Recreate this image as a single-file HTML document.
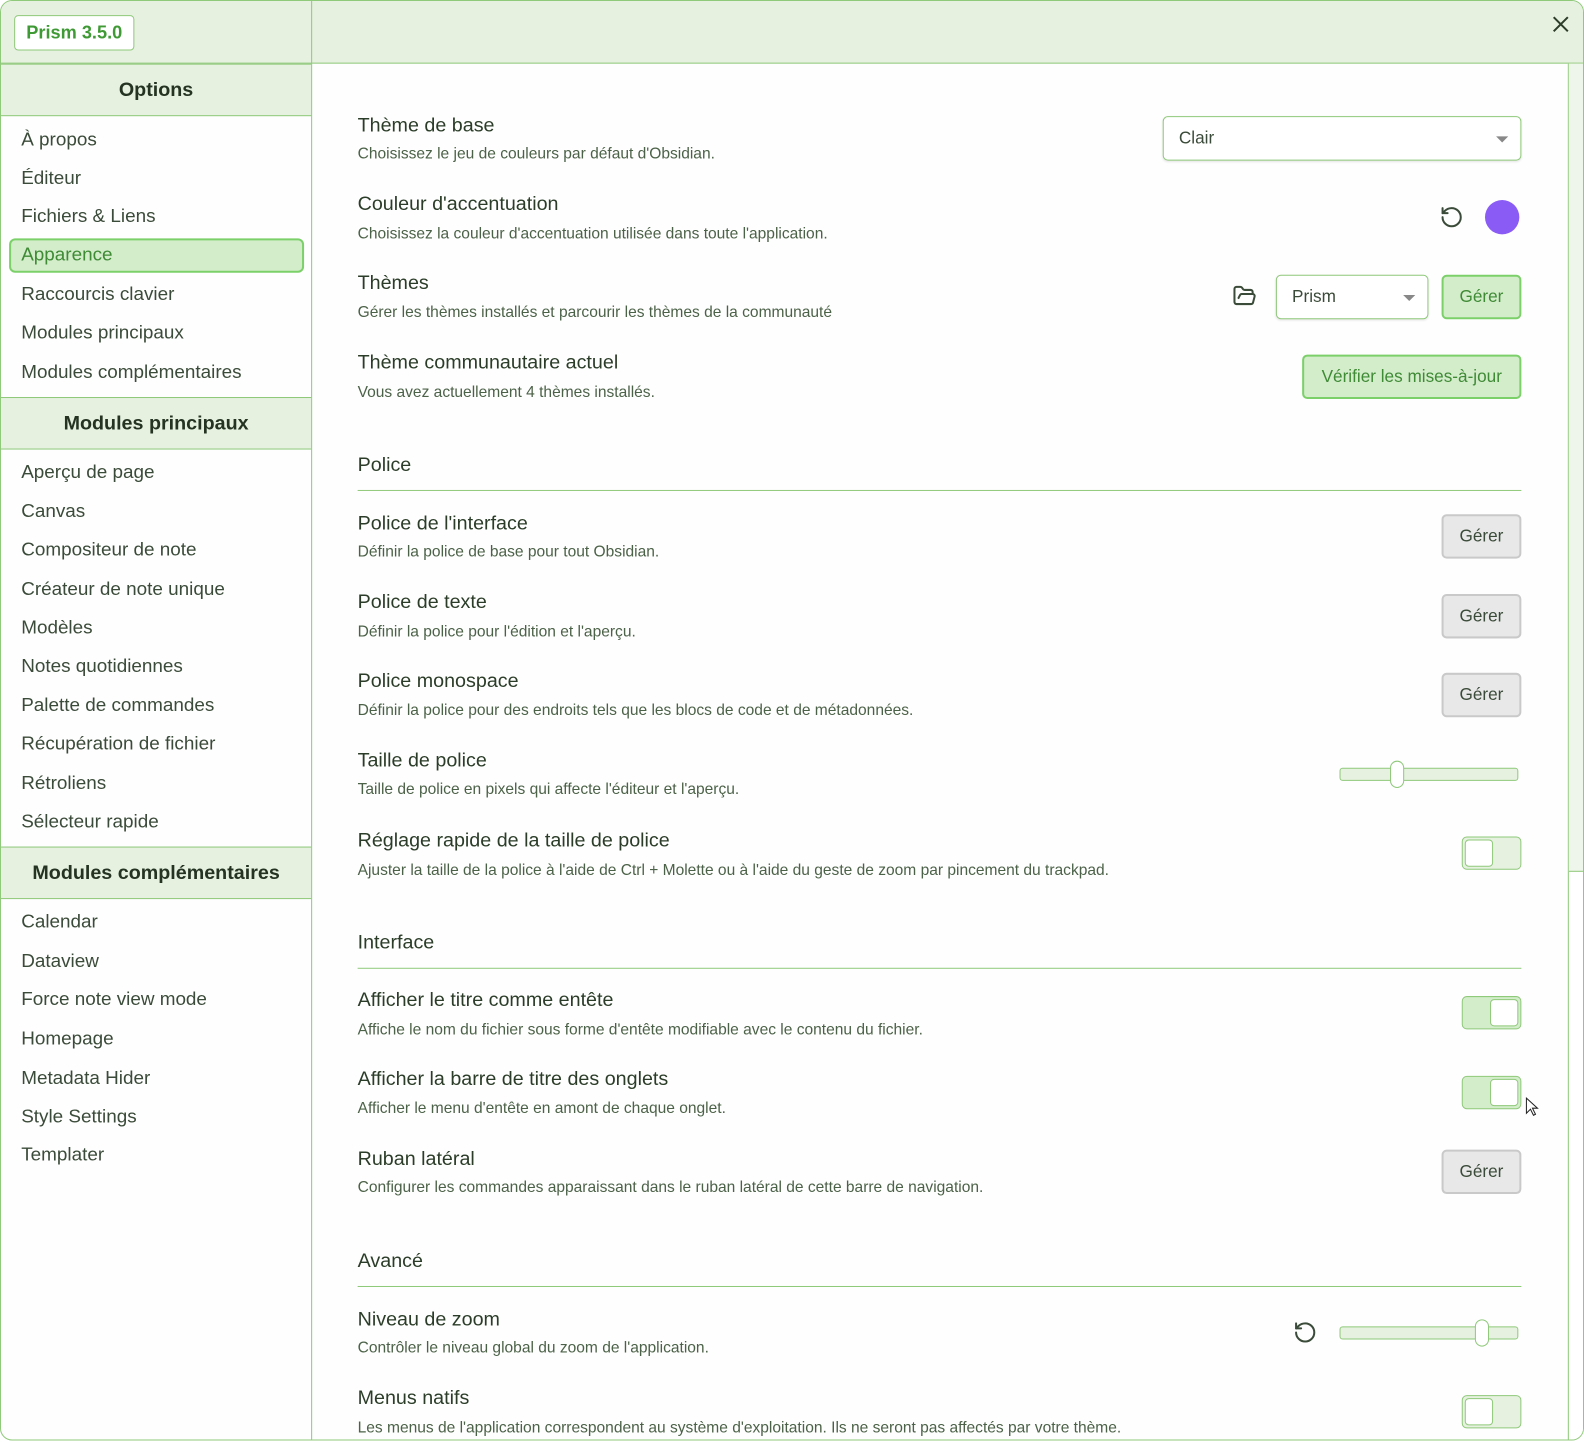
<!DOCTYPE html>
<html><head><meta charset="utf-8">
<style>
*{box-sizing:border-box;margin:0;padding:0}
html,body{width:1584px;height:1441px;overflow:hidden;background:#fff}
body{font-family:"Liberation Sans",sans-serif}
#s{position:absolute;left:0;top:0;width:1568px;height:1427px;transform:scale(1.0102);transform-origin:0 0}
.modal{position:absolute;left:0;top:0;width:1568px;height:1426px;border:1px solid #8fc97a;border-radius:12px;overflow:hidden;background:#fefefe}
.top{position:absolute;left:0;top:0;width:1568px;height:62px;background:#e6f1e0;border-bottom:1px solid #8fc97a}
.vdiv{position:absolute;left:307px;top:0;width:1px;height:1427px;background:#8fc97a}
.badge{position:absolute;left:13px;top:14px;width:119px;height:35px;background:#fff;border:1px solid #8fc97a;border-radius:4px;color:#3f9a35;font-weight:bold;font-size:18px;line-height:33px;text-align:center}
.x{position:absolute;left:1535px;top:14px}
.sh{position:absolute;left:0;width:307px;height:52px;background:#e6f1e0;border-top:1px solid #8fc97a;border-bottom:1px solid #8fc97a;text-align:center;font-weight:bold;font-size:19.5px;color:#243322;line-height:50px}
.si{position:absolute;left:20px;font-size:18.7px;color:#3b4b39;line-height:24px;white-space:nowrap}
.act{position:absolute;left:8px;top:235px;width:292px;height:34px;background:#d3edcb;border:2px solid #7cd06a;border-radius:6px}
.t{position:absolute;left:353px;font-size:19.5px;color:#2b3d28;line-height:24px;white-space:nowrap}
.d{position:absolute;left:353px;font-size:15.4px;color:#4c6248;line-height:20px;white-space:nowrap}
.hd{position:absolute;left:353px;font-size:19.5px;color:#2b3d28;line-height:24px}
.ln{position:absolute;left:353px;width:1152px;height:1px;background:#8fc97a}
.btn{position:absolute;left:1426px;width:79px;height:44px;background:#e8e8e8;border:2px solid #c9c9c9;border-radius:5px;font-size:17px;color:#3b4b39;text-align:center;line-height:40px}
.gbtn{position:absolute;height:44px;background:#d3edcb;border:2px solid #7cd06a;border-radius:5px;font-size:17px;color:#3f8a35;text-align:center;line-height:40px}
.dd{position:absolute;height:44px;background:#fff;border:1px solid #8fc97a;border-radius:5px;font-size:17px;color:#3b4b39;line-height:42px;padding-left:15px;box-shadow:0 1px 2px rgba(0,0,0,.1)}
.dd:after{content:"";position:absolute;right:12px;top:19px;border-left:6px solid transparent;border-right:6px solid transparent;border-top:6px solid #888}
.tg{position:absolute;left:1446px;width:59px;height:33px;border:1px solid #8fc97a;border-radius:5px;background:#e6f1e0}
.tg.on{background:#d3edcb}
.tg i{position:absolute;top:2px;width:28px;height:27px;background:#fff;border:1px solid #8fc97a;border-radius:4px}
.sl{position:absolute;left:1325px;width:177px;height:13px;background:#e6f1e0;border:1px solid #8fc97a;border-radius:3px}
.sl i{position:absolute;top:-8px;width:14px;height:27px;background:#fff;border:1px solid #8fc97a;border-radius:7px}
.sb{position:absolute;left:1551px;top:62px;width:17px;height:1366px;border-left:1px solid #8fc97a;background:#fff}
.sb i{position:absolute;left:0;top:0;width:16px;height:800px;background:#eef5ea;border-bottom:1px solid #8fc97a}
</style></head><body><div id="s">
<div class="modal">
<div class="top"></div>
<div class="badge">Prism 3.5.0</div>
<svg class="x" width="18" height="18" viewBox="0 0 18 18"><path d="M2 2L16 16M16 2L2 16" stroke="#2d3d2a" stroke-width="2"/></svg>

<div class="sh" style="top:62px">Options</div>
<div class="si" style="top:125px">À propos</div>
<div class="si" style="top:163px">Éditeur</div>
<div class="si" style="top:201px">Fichiers &amp; Liens</div>
<div class="act"></div>
<div class="si" style="top:239px;color:#3f8a35">Apparence</div>
<div class="si" style="top:278px">Raccourcis clavier</div>
<div class="si" style="top:316px">Modules principaux</div>
<div class="si" style="top:355px">Modules complémentaires</div>
<div class="sh" style="top:392px">Modules principaux</div>
<div class="si" style="top:454px">Aperçu de page</div>
<div class="si" style="top:493px">Canvas</div>
<div class="si" style="top:531px">Compositeur de note</div>
<div class="si" style="top:570px">Créateur de note unique</div>
<div class="si" style="top:608px">Modèles</div>
<div class="si" style="top:646px">Notes quotidiennes</div>
<div class="si" style="top:685px">Palette de commandes</div>
<div class="si" style="top:723px">Récupération de fichier</div>
<div class="si" style="top:762px">Rétroliens</div>
<div class="si" style="top:800px">Sélecteur rapide</div>
<div class="sh" style="top:837px">Modules complémentaires</div>
<div class="si" style="top:899px">Calendar</div>
<div class="si" style="top:938px">Dataview</div>
<div class="si" style="top:976px">Force note view mode</div>
<div class="si" style="top:1015px">Homepage</div>
<div class="si" style="top:1054px">Metadata Hider</div>
<div class="si" style="top:1092px">Style Settings</div>
<div class="si" style="top:1130px">Templater</div>
<div class="vdiv"></div>

<div class="t" style="top:111px">Thème de base</div>
<div class="d" style="top:142px">Choisissez le jeu de couleurs par défaut d'Obsidian.</div>
<div class="dd" style="left:1150px;top:114px;width:355px">Clair</div>

<div class="t" style="top:189px">Couleur d'accentuation</div>
<div class="d" style="top:221px">Choisissez la couleur d'accentuation utilisée dans toute l'application.</div>
<svg style="position:absolute;left:1424px;top:202px" width="24" height="24" viewBox="0 0 24 24" fill="none" stroke="#3b4b39" stroke-width="2" stroke-linecap="round" stroke-linejoin="round"><path d="M3 12a9 9 0 1 0 9-9 9.75 9.75 0 0 0-6.74 2.74L3 8"/><path d="M3 3v5h5"/></svg>
<div style="position:absolute;left:1469px;top:197px;width:34px;height:34px;border-radius:50%;background:#8a5cf5"></div>

<div class="t" style="top:267px">Thèmes</div>
<div class="d" style="top:299px">Gérer les thèmes installés et parcourir les thèmes de la communauté</div>
<svg style="position:absolute;left:1219px;top:280px" width="24" height="24" viewBox="0 0 24 24" fill="none" stroke="#3b4b39" stroke-width="2" stroke-linecap="round" stroke-linejoin="round"><path d="m6 14 1.5-2.9A2 2 0 0 1 9.24 10H20a2 2 0 0 1 1.94 2.5l-1.54 6a2 2 0 0 1-1.95 1.5H4a2 2 0 0 1-2-2V5a2 2 0 0 1 2-2h3.9a2 2 0 0 1 1.69.9l.81 1.2a2 2 0 0 0 1.67.9H18a2 2 0 0 1 2 2v2"/></svg>
<div class="dd" style="left:1262px;top:271px;width:151px">Prism</div>
<div class="gbtn" style="left:1426px;top:271px;width:79px">Gérer</div>

<div class="t" style="top:346px">Thème communautaire actuel</div>
<div class="d" style="top:378px">Vous avez actuellement 4 thèmes installés.</div>
<div class="gbtn" style="left:1288px;top:350px;width:217px">Vérifier les mises-à-jour</div>

<div class="hd" style="top:447px">Police</div>
<div class="ln" style="top:484px"></div>

<div class="t" style="top:505px">Police de l'interface</div>
<div class="d" style="top:536px">Définir la police de base pour tout Obsidian.</div>
<div class="btn" style="top:508px">Gérer</div>

<div class="t" style="top:583px">Police de texte</div>
<div class="d" style="top:615px">Définir la police pour l'édition et l'aperçu.</div>
<div class="btn" style="top:587px">Gérer</div>

<div class="t" style="top:661px">Police monospace</div>
<div class="d" style="top:693px">Définir la police pour des endroits tels que les blocs de code et de métadonnées.</div>
<div class="btn" style="top:665px">Gérer</div>

<div class="t" style="top:740px">Taille de police</div>
<div class="d" style="top:771px">Taille de police en pixels qui affecte l'éditeur et l'aperçu.</div>
<div class="sl" style="top:759px"><i style="left:49px"></i></div>

<div class="t" style="top:819px">Réglage rapide de la taille de police</div>
<div class="d" style="top:851px">Ajuster la taille de la police à l'aide de Ctrl + Molette ou à l'aide du geste de zoom par pincement du trackpad.</div>
<div class="tg" style="top:827px"><i style="left:2px"></i></div>

<div class="hd" style="top:920px">Interface</div>
<div class="ln" style="top:957px"></div>

<div class="t" style="top:977px">Afficher le titre comme entête</div>
<div class="d" style="top:1009px">Affiche le nom du fichier sous forme d'entête modifiable avec le contenu du fichier.</div>
<div class="tg on" style="top:985px"><i style="left:27px"></i></div>

<div class="t" style="top:1055px">Afficher la barre de titre des onglets</div>
<div class="d" style="top:1087px">Afficher le menu d'entête en amont de chaque onglet.</div>
<div class="tg on" style="top:1064px"><i style="left:27px"></i></div>
<svg style="position:absolute;left:1509px;top:1085px" width="14" height="20" viewBox="0 0 14 20"><path d="M1 1v15l4-4 3 6 2-1-3-6h5z" fill="#fff" stroke="#222" stroke-width="1"/></svg>

<div class="t" style="top:1134px">Ruban latéral</div>
<div class="d" style="top:1165px">Configurer les commandes apparaissant dans le ruban latéral de cette barre de navigation.</div>
<div class="btn" style="top:1137px">Gérer</div>

<div class="hd" style="top:1235px">Avancé</div>
<div class="ln" style="top:1272px"></div>

<div class="t" style="top:1293px">Niveau de zoom</div>
<div class="d" style="top:1324px">Contrôler le niveau global du zoom de l'application.</div>
<svg style="position:absolute;left:1279px;top:1306px" width="24" height="24" viewBox="0 0 24 24" fill="none" stroke="#3b4b39" stroke-width="2" stroke-linecap="round" stroke-linejoin="round"><path d="M3 12a9 9 0 1 0 9-9 9.75 9.75 0 0 0-6.74 2.74L3 8"/><path d="M3 3v5h5"/></svg>
<div class="sl" style="top:1312px"><i style="left:133px"></i></div>

<div class="t" style="top:1371px">Menus natifs</div>
<div class="d" style="top:1403px">Les menus de l'application correspondent au système d'exploitation. Ils ne seront pas affectés par votre thème.</div>
<div class="tg" style="top:1380px"><i style="left:2px"></i></div>

<div class="sb"><i></i></div>
</div>
</div></body></html>
